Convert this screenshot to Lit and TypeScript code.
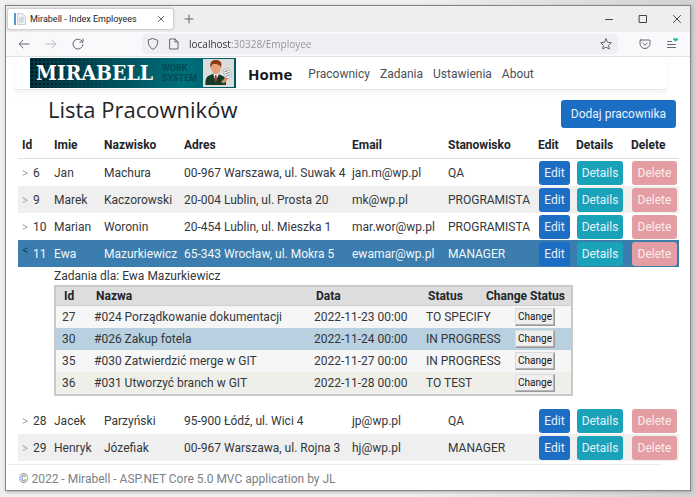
import { LitElement, html, css, svg, nothing } from "lit";
import { customElement, state } from "lit/decorators.js";
import { classMap } from "lit/directives/class-map.js";

interface Task {
  id: number;
  name: string;
  date: string;
  status: string;
}

interface Employee {
  id: number;
  first: string;
  last: string;
  address: string;
  email: string;
  role: string;
  tasks?: Task[];
}

const EMPLOYEES: Employee[] = [
  { id: 6, first: "Jan", last: "Machura", address: "00-967 Warszawa, ul. Suwak 4", email: "jan.m@wp.pl", role: "QA" },
  { id: 9, first: "Marek", last: "Kaczorowski", address: "20-004 Lublin, ul. Prosta 20", email: "mk@wp.pl", role: "PROGRAMISTA" },
  { id: 10, first: "Marian", last: "Woronin", address: "20-454 Lublin, ul. Mieszka 1", email: "mar.wor@wp.pl", role: "PROGRAMISTA" },
  {
    id: 11, first: "Ewa", last: "Mazurkiewicz", address: "65-343 Wrocław, ul. Mokra 5", email: "ewamar@wp.pl", role: "MANAGER",
    tasks: [
      { id: 27, name: "#024 Porządkowanie dokumentacji", date: "2022-11-23 00:00", status: "TO SPECIFY" },
      { id: 30, name: "#026 Zakup fotela", date: "2022-11-24 00:00", status: "IN PROGRESS" },
      { id: 35, name: "#030 Zatwierdzić merge w GIT", date: "2022-11-27 00:00", status: "IN PROGRESS" },
      { id: 36, name: "#031 Utworzyć branch w GIT", date: "2022-11-28 00:00", status: "TO TEST" },
    ],
  },
  { id: 28, first: "Jacek", last: "Parzyński", address: "95-900 Łódź, ul. Wici 4", email: "jp@wp.pl", role: "QA" },
  { id: 29, first: "Henryk", last: "Józefiak", address: "00-967 Warszawa, ul. Rojna 3", email: "hj@wp.pl", role: "MANAGER" },
];

const display = css`"Open Sans", "Noto Sans", sans-serif`;
const sans = css`Roboto, "Open Sans", sans-serif`;

const icon = (body: unknown, size = 12) =>
  html`<svg width=${size} height=${size} viewBox="0 0 12 12" fill="none" stroke="currentColor" stroke-width="1" stroke-linecap="round" stroke-linejoin="round" aria-hidden="true">${body}</svg>`;

@customElement("browser-chrome")
class BrowserChrome extends LitElement {
  static styles = css`
    :host { display: block; font-family: ${sans}; color: #66666d; }
    button { border: 0; background: none; padding: 0; margin: 0; color: inherit; display: flex; }
    svg { display: block; }
    .titlebar { display: flex; align-items: center; height: 26px; background: #eeeeee; padding: 0 7px 0 1px; }
    .tab { display: flex; align-items: center; box-sizing: border-box; width: 167px; height: 22px; padding: 0 6px 0 6px; gap: 4px;
      background: #fff; border: 1px solid #cfcfd4; border-radius: 3px; box-shadow: 0 0 2px #c4c4c8; }
    .title { flex: 1; font-size: 9px; color: #222228; white-space: nowrap; }
    .plus { margin-left: 9px; }
    .controls { margin-left: auto; display: flex; gap: 22px; align-items: center; color: #444; }
    .toolbar { display: flex; align-items: center; height: 24px; background: #f9f9fb; border-bottom: 1px solid #e2e2e4; padding: 0 12px 0 12px; }
    .nav { display: flex; gap: 15px; width: 124px; }
    .dim { color: #b9b9be; }
    .field { flex: 1; display: flex; align-items: center; gap: 9px; height: 20px; background: #f0f0f4; border-radius: 3px; padding: 0 6px 0 5px; }
    .url { flex: 1; min-width: 0; border: 0; outline: 0; padding: 0; font: 10px/16px ${display}; color: transparent;
      background: linear-gradient(90deg, #2b2a33 42px, #8e8e96 42px); -webkit-background-clip: text; background-clip: text; }
    .tools { display: flex; gap: 15px; margin-left: 21px; }
  `;

  render() {
    return html`
      <div class="titlebar">
        <div class="tab">
          <svg width="12" height="12" viewBox="0 0 12 12" aria-hidden="true">
            <rect x="0" y="0" width="2" height="12" fill="#4a9cc9" /><path d="M3.5 .5h5l3 3v8h-8z" fill="#eef2f5" stroke="#c6ced6" />
            <path d="M5 5h5M5 7h5M5 9h4" stroke="#b3c3cf" />
          </svg>
          <span class="title">Mirabell - Index Employees</span>
          <button aria-label="Close tab">${icon(svg`<path d="M3.5 3.5l5 5m0-5l-5 5"/>`)}</button>
        </div>
        <button class="plus" aria-label="New tab">${icon(svg`<path d="M6 2v8M2 6h8"/>`)}</button>
        <div class="controls">
          <button aria-label="Minimize">${icon(svg`<path d="M2.5 6.5h7"/>`)}</button>
          <button aria-label="Maximize">${icon(svg`<path d="M2.5 2.5h7v7h-7z"/>`)}</button>
          <button aria-label="Close">${icon(svg`<path d="M2.5 2.5l7 7m0-7l-7 7"/>`)}</button>
        </div>
      </div>
      <div class="toolbar">
        <div class="nav">
          <button aria-label="Back">${icon(svg`<path d="M11 6H1.2M5 2.2L1.2 6 5 9.8"/>`)}</button>
          <button class="dim" aria-label="Forward">${icon(svg`<path d="M1 6h9.800M7 2.200L10.800 6 7 9.800"/>`)}</button>
          <button aria-label="Reload">${icon(svg`<path d="M10.300 3.500A5 5 0 1 0 11 6.500M11 1v3.200H7.800"/>`)}</button>
        </div>
        <div class="field">
          ${icon(svg`<path d="M6 .6l4.700 1.700c.3 4.300-1.200 7.300-4.700 9.100C2.500 9.600 1 6.600 1.300 2.300z"/>`)}
          ${icon(svg`<path d="M2 1h5l3 3v7H2zM7 1v3h3"/>`)}
          <input class="url" type="text" aria-label="Address" value="localhost:30328/Employee" />
          <button aria-label="Bookmark">${icon(svg`<path d="M6 .8l1.600 3.400 3.700.5-2.700 2.600.7 3.700L6 9.200 2.700 11l.7-3.700L.7 4.700l3.700-.5z"/>`)}</button>
        </div>
        <div class="tools">
          <button aria-label="Pocket">${icon(svg`<path d="M1.700 2h8.600q.7 0 .7.700V5.500a5 5 0 0 1-10 0V2.700q0-.7.700-.7zM3.800 5L6 7.200 8.200 5"/>`)}</button>
          <button aria-label="Menu">${icon(svg`<path d="M1.500 3.500h4M1.500 6.500h8M1.500 9.500h8"/><path d="M8 .8h3.500v1.200L9.800 3 8 2z" fill="#1cc4a0" stroke="#1cc4a0"/>`)}</button>
        </div>
      </div>
    `;
  }
}

@customElement("site-header")
class SiteHeader extends LitElement {
  static styles = css`
    :host { display: block; font-family: ${sans}; }
    .bar { display: flex; align-items: center; height: 32px; margin: 0 24px 0 9px; padding-left: 15px; background: #fff;
      border-bottom: 1px solid #e6e6e6; box-shadow: 0 3px 6px rgba(0, 0, 0, 0.05); }
    a { text-decoration: none; color: #4c5054; font-size: 12px; white-space: nowrap; }
    .logo { display: flex; align-items: center; box-sizing: border-box; width: 206px; height: 30px; padding: 0 2px 0 6px;
      background: linear-gradient(90deg, transparent, #00535f 45%, #00707c 75%, #005560), radial-gradient(circle, #001216 1px, transparent 1px) 0 0 / 4px 4px, #023641; }
    .word { font: bold 21px/30px "DejaVu Serif Condensed", "DejaVu Serif", serif; color: #fff; width: 126px; }
    .sub { flex: 1; font-size: 9px; line-height: 10px; font-weight: 700; color: #034953; }
    .links { display: flex; align-items: center; gap: 10px; padding: 2px 0 0 12px; }
    .home { font: bold 15px/20px ${display}; color: #16191c; padding-right: 6px; }
  `;

  render() {
    return html`
      <nav class="bar">
        <a class="logo" href="#">
          <span class="word">MIRABELL</span>
          <span class="sub">WORK<br />SYSTEM</span>
          <svg width="31" height="28" viewBox="0 0 31 28" aria-hidden="true">
            <rect width="31" height="28" fill="#dcdcda" />
            <path d="M2.500 26c-.4-6 1-9 5-10l3-1.500h4l4 2c4 1 4.500 4 4.500 9.500z" fill="#153c25" />
            <path d="M10 14.500l2.500 8 3.500-7.500z" fill="#f4f4f0" /><path d="M12 16l1.500 0 .5 6-1.500 1.500-1-2z" fill="#a3352b" />
            <ellipse cx="13" cy="9" rx="4.800" ry="6.200" fill="#e5a27c" />
            <path d="M7.500 9C6.500 3 9 .8 13 1c4 0 6.500 2 5 7.500C17 5.500 14 5 10.500 5 8.800 5.500 8.600 7 7.500 9z" fill="#8b3c13" />
            <path d="M20 11l6-2 3 8-6 4z" fill="#f2f4f6" stroke="#99a3ad" stroke-width=".6" />
            <path d="M21.500 12.800l4-1.500M22.300 15l4.200-1.600M23.200 17.300l4-1.700" stroke="#71808c" />
            <path d="M18 23l5-5 2 1.500-4 5z" fill="#d98f68" />
          </svg>
        </a>
        <div class="links">
          <a class="home" href="#">Home</a>
          <a href="#">Pracownicy</a>
          <a href="#">Zadania</a>
          <a href="#">Ustawienia</a>
          <a href="#">About</a>
        </div>
      </nav>
    `;
  }
}

@customElement("task-table")
class TaskTable extends LitElement {
  static properties = { tasks: { attribute: false } };
  declare tasks: Task[];

  static styles = css`
    :host { display: block; font-family: ${sans}; font-size: 12px; }
    table { width: 100%; box-sizing: border-box; table-layout: fixed; border-collapse: separate; border-spacing: 0; border: 2px solid #c9c9c9; color: #33373b; }
    .c-id { width: 32px; } .c-name { width: 220px; } .c-date { width: 112px; } .c-status { width: 58px; } .c-change { width: 93px; }
    th { height: 19px; padding: 0 0 0 8px; box-sizing: border-box; background: #dddddd; text-align: left; font-weight: 700; line-height: 18px; color: #212529; white-space: nowrap; border-bottom: 1px solid #d0d0d0; }
    td { height: 22px; padding: 0 0 0 6px; line-height: 20px; white-space: nowrap; background: #f6f6f6; }
    .active td { background: #b8d0e0; }
    .tinted td { background: #efefe9; }
    td.action { padding-left: 37px; }
    button { display: block; box-sizing: border-box; width: 40px; height: 18px; padding: 0; font: 10px/14px ${sans}; color: #111; background: #efefef; border: 1px solid; border-color: #dcdcdc #9b9b9b #9b9b9b #dcdcdc; box-shadow: inset -1px -1px #b4b4b4; }
  `;

  render() {
    return html`
      <table>
        <colgroup><col class="c-id" /><col class="c-name" /><col class="c-date" /><col class="c-status" /><col class="c-change" /></colgroup>
        <thead><tr><th>Id</th><th>Nazwa</th><th>Data</th><th>Status</th><th>Change Status</th></tr></thead>
        <tbody>
          ${this.tasks.map((t, i) => html`
            <tr class=${classMap({ active: i === 1, tinted: i === 3 })}>
              <td>${t.id}</td><td>${t.name}</td><td>${t.date}</td><td>${t.status}</td>
              <td class="action"><button>Change</button></td>
            </tr>`)}
        </tbody>
      </table>
    `;
  }
}

@customElement("app-root")
class AppRoot extends LitElement {
  @state() private openId = 11;

  static styles = css`
    :host { display: flex; box-sizing: border-box; min-height: 100vh; padding: 5px 5px 6px 5px; font-family: ${sans}; font-size: 12px; color: #33373b;
      background: linear-gradient(90deg, #efefef 60%, #d2d2d2); }
    .window { flex: 1; display: flex; flex-direction: column; box-sizing: border-box; min-width: 0; background: #fff; border: 1px solid #858585; box-shadow: 1px 1px 3px #a8a8a8; }
    main { flex: 1; padding: 0 11px 0 12px; }
    .heading { display: flex; align-items: flex-start; justify-content: space-between; height: 42px; padding: 0 3px 0 30px; }
    h1 { margin: 0; font: 400 22px/38px ${display}; color: #212529; }
    .btn { display: block; box-sizing: border-box; border: 0; border-radius: 3px; padding: 0; font: 12px/24px ${sans}; color: #e9f1fa; background: #1c6dc4; height: 24px; white-space: nowrap; }
    .add { height: 28px; width: 115px; margin-top: 10px; }
    .edit { width: 31px; }
    .details { width: 46px; background: #1aa2b8; }
    .delete { width: 45px; background: #e39da3; color: #fbeced; }
    table { width: 100%; table-layout: fixed; border-collapse: separate; border-spacing: 0; }
    .c-id { width: 32px; } .c-first { width: 50px; } .c-last { width: 80px; } .c-address { width: 168px; } .c-email { width: 96px; }
    .c-role { width: 90px; } .c-edit { width: 38px; } .c-details { width: 55px; } .c-delete { width: 52px; }
    th { box-sizing: border-box; height: 27px; padding: 0 0 0 4px; text-align: left; font-weight: 700; line-height: 22px; color: #212529; border-bottom: 1px solid #dcdfe2; white-space: nowrap; }
    td { height: 27px; padding: 0 0 0 4px; line-height: 20px; white-space: nowrap; }
    td.action { padding-left: 5px; }
    .striped td { background: #efefef; }
    .selected td { background: #3a7dae; color: #f2f7fa; }
    .idcell { display: flex; gap: 5px; }
    .toggle { border: 0; background: none; padding: 0; width: 6px; font: 10px/20px ${display}; color: #909090; }
    .selected .toggle { align-self: flex-start; line-height: 12px; color: #12293a; }
    td.tasks { height: auto; padding: 0 106px 11px 36px; }
    .caption { margin: 0; line-height: 18px; }
    footer { display: block; margin: 0 28px 0 2px; padding-left: 11px; border-top: 1px solid #ededed; height: 25px; font-size: 12px; line-height: 28px; color: #7b8187; }
  `;

  private row(e: Employee, i: number) {
    const open = e.id === this.openId;
    return html`
      <tr class=${classMap({ selected: open, striped: !open && i % 2 === 1 })}>
        <td><div class="idcell">
          <button class="toggle" aria-label="Zadania" aria-expanded=${open} @click=${() => (this.openId = open ? 0 : e.id)}>${open ? "<" : ">"}</button>
          <span>${e.id}</span></div></td>
        <td>${e.first}</td><td>${e.last}</td><td>${e.address}</td><td>${e.email}</td><td>${e.role}</td>
        <td class="action"><button class="btn edit">Edit</button></td>
        <td class="action"><button class="btn details">Details</button></td>
        <td class="action"><button class="btn delete">Delete</button></td>
      </tr>
      ${open && e.tasks ? html`
        <tr><td class="tasks" colspan="9">
          <p class="caption">Zadania dla: ${e.first} ${e.last}</p>
          <task-table .tasks=${e.tasks}></task-table>
        </td></tr>` : nothing}
    `;
  }

  render() {
    return html`
      <div class="window">
        <browser-chrome></browser-chrome>
        <site-header></site-header>
        <main>
          <div class="heading"><h1>Lista Pracowników</h1><button class="btn add">Dodaj pracownika</button></div>
          <table>
            <colgroup><col class="c-id" /><col class="c-first" /><col class="c-last" /><col class="c-address" /><col class="c-email" /><col class="c-role" /><col class="c-edit" /><col class="c-details" /><col class="c-delete" /></colgroup>
            <thead><tr><th>Id</th><th>Imie</th><th>Nazwisko</th><th>Adres</th><th>Email</th><th>Stanowisko</th><th>Edit</th><th>Details</th><th>Delete</th></tr></thead>
            <tbody>${EMPLOYEES.map((e, i) => this.row(e, i))}</tbody>
          </table>
        </main>
        <footer>© 2022 - Mirabell - ASP.NET Core 5.0 MVC application by JL</footer>
      </div>
    `;
  }
}
